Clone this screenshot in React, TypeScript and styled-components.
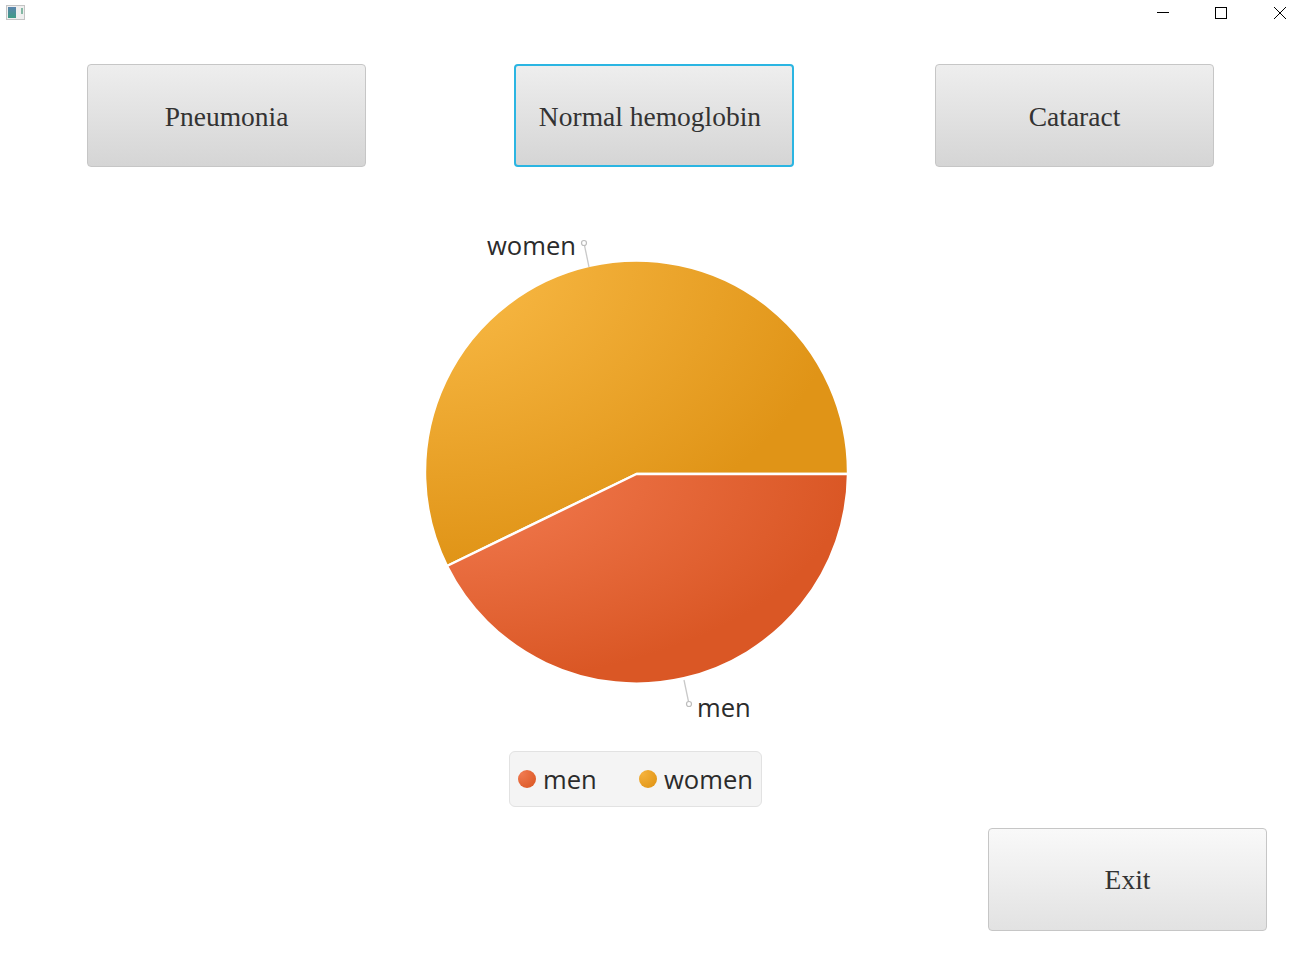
import React from 'react';
import styled, { createGlobalStyle } from 'styled-components';

const GlobalStyle = createGlobalStyle`
  html, body { margin: 0; padding: 0; background: #fff; }
  body { font-family: "Open Sans", "Liberation Sans", sans-serif; color: #333; }
`;

const Page = styled.div`
  width: 1306px;
  height: 963px;
  display: flex;
  flex-direction: column;
  overflow: hidden;
  background: #fff;
`;

const TitleBar = styled.div`
  height: 26px;
  display: flex;
  justify-content: space-between;
  align-items: flex-start;
`;

const AppIcon = styled.svg`
  width: 19px;
  height: 15px;
  margin: 5px 0 0 6px;
`;

const WindowControls = styled.div`
  display: flex;
  align-items: center;
  padding: 7px 20px 0 0;
  gap: 45px;
`;

const ControlIcon = styled.svg`
  width: 13px;
  height: 12px;
  display: block;
`;

const ButtonRow = styled.div`
  display: flex;
  align-items: flex-start;
  margin-top: 38px;
  padding-left: 87px;
`;

const ActionButton = styled.button<{ $focused?: boolean; $light?: boolean; $width: number; $offset?: number; $nudge?: number }>`
  box-sizing: border-box;
  width: ${({ $width }) => $width}px;
  height: 103px;
  margin-left: ${({ $offset = 0 }) => $offset}px;
  padding: ${({ $light }) => ($light ? 0 : 2)}px ${({ $nudge = 0 }) => $nudge}px 0 0;
  border-radius: 4px;
  border: ${({ $focused }) => ($focused ? '2px solid #2bb5e2' : '1px solid #c6c6c6')};
  background: ${({ $light }) =>
    $light ? 'linear-gradient(#f9f9f9, #e2e2e2)' : 'linear-gradient(#eeeeee, #d5d5d5)'};
  font-family: "Liberation Serif", "Times New Roman", serif;
  font-size: 27.5px;
  color: #333;
`;

const ChartColumn = styled.div`
  width: 1273px;
  display: flex;
  flex-direction: column;
  align-items: center;
  margin-top: 63px;
`;

const ChartStage = styled.div`
  position: relative;
  width: 440px;
  height: 500px;
  margin-right: 1px;
`;

const PieSvg = styled.svg`
  display: block;
  width: 440px;
  height: 500px;
`;

const SliceLabel = styled.span<{ $left: number; $top: number }>`
  position: absolute;
  left: ${({ $left }) => $left}px;
  top: ${({ $top }) => $top}px;
  font-size: 25.6px;
  line-height: 32px;
  color: #2b2b2b;
`;

const Legend = styled.div`
  box-sizing: border-box;
  width: 253px;
  height: 56px;
  margin: 21px 2px 0 0;
  padding-left: 8px;
  display: flex;
  align-items: center;
  background: #f4f4f4;
  border: 1px solid #e2e2e2;
  border-radius: 6px;
`;

const LegendItem = styled.div<{ $width: number }>`
  width: ${({ $width }) => $width}px;
  display: flex;
  align-items: center;
  gap: 7px;
  font-size: 25.6px;
  line-height: 32px;
  color: #2b2b2b;
`;

const LegendName = styled.span`
  position: relative;
  top: 1px;
`;

const LegendDot = styled.span<{ $from: string; $to: string }>`
  width: 18px;
  height: 18px;
  border-radius: 50%;
  background: radial-gradient(circle at 20% 20%, ${({ $from }) => $from}, ${({ $to }) => $to} 100%);
`;

const ExitRow = styled.div`
  display: flex;
  justify-content: flex-end;
  margin-top: 21px;
  padding-right: 39px;
`;

const cx = 220.5;
const cy = 244;
const r = 211.5;

export default function App() {
  const edgeX = cx - 189.5;
  const edgeY = cy + 92;
  return (
    <Page>
      <GlobalStyle />
      <TitleBar>
        <AppIcon viewBox="0 0 19 15">
          <defs>
            <linearGradient id="iconFill" x1="0" y1="0" x2="0" y2="1">
              <stop offset="0" stopColor="#5a84ad" />
              <stop offset="1" stopColor="#3f9c85" />
            </linearGradient>
          </defs>
          <rect x="0.5" y="0.5" width="18" height="14" fill="#efefef" stroke="#c4c4c4" />
          <rect x="2" y="2" width="8" height="11" fill="url(#iconFill)" />
          <rect x="15" y="3" width="2" height="6" fill="#84b8a4" />
        </AppIcon>
        <WindowControls>
          <ControlIcon viewBox="0 0 13 12">
            <path d="M0 5.5H12" stroke="#000" strokeWidth="1" />
          </ControlIcon>
          <ControlIcon viewBox="0 0 13 12">
            <rect x="0.5" y="0.5" width="11" height="11" fill="none" stroke="#000" strokeWidth="1" />
          </ControlIcon>
          <ControlIcon viewBox="0 0 13 12">
            <path d="M1 0L13 12M13 0L1 12" stroke="#000" strokeWidth="1" />
          </ControlIcon>
        </WindowControls>
      </TitleBar>

      <ButtonRow>
        <ActionButton $width={279}>Pneumonia</ActionButton>
        <ActionButton $width={280} $offset={148} $focused $nudge={8}>Normal hemoglobin</ActionButton>
        <ActionButton $width={279} $offset={141}>Cataract</ActionButton>
      </ButtonRow>

      <ChartColumn>
        <ChartStage>
          <PieSvg viewBox="0 0 440 500">
            <defs>
              <radialGradient id="womenFill" cx="0" cy="0" r="1">
                <stop offset="0" stopColor="#fbbd4a" />
                <stop offset="1" stopColor="#e09417" />
              </radialGradient>
              <radialGradient id="menFill" cx="0" cy="0" r="1">
                <stop offset="0" stopColor="#f47d53" />
                <stop offset="1" stopColor="#da5725" />
              </radialGradient>
            </defs>
            <path d={`M${cx} ${cy}L${cx + r} ${cy}A${r} ${r} 0 1 0 ${edgeX} ${edgeY}Z`} fill="url(#womenFill)" stroke="#fff" strokeWidth="2.4" strokeLinejoin="round" />
            <path d={`M${cx} ${cy}L${edgeX} ${edgeY}A${r} ${r} 0 0 0 ${cx + r} ${cy}Z`} fill="url(#menFill)" stroke="#fff" strokeWidth="2.4" strokeLinejoin="round" />
            <path d="M168 13L173 37" stroke="#c9c9c9" strokeWidth="1.3" fill="none" />
            <circle cx="168" cy="13" r="2.5" fill="#fff" stroke="#bdbdbd" strokeWidth="1.2" />
            <path d="M268 450L273 474" stroke="#c9c9c9" strokeWidth="1.3" fill="none" />
            <circle cx="273" cy="474" r="2.5" fill="#fff" stroke="#bdbdbd" strokeWidth="1.2" />
          </PieSvg>
          <SliceLabel $left={71} $top={0}>women</SliceLabel>
          <SliceLabel $left={281} $top={462}>men</SliceLabel>
        </ChartStage>
        <Legend>
          <LegendItem $width={121}>
            <LegendDot $from="#f07a50" $to="#d95420" />
            <LegendName>men</LegendName>
          </LegendItem>
          <LegendItem $width={122}>
            <LegendDot $from="#f5b23c" $to="#de9111" />
            <LegendName>women</LegendName>
          </LegendItem>
        </Legend>
      </ChartColumn>

      <ExitRow>
        <ActionButton $width={279} $light>Exit</ActionButton>
      </ExitRow>
    </Page>
  );
}
